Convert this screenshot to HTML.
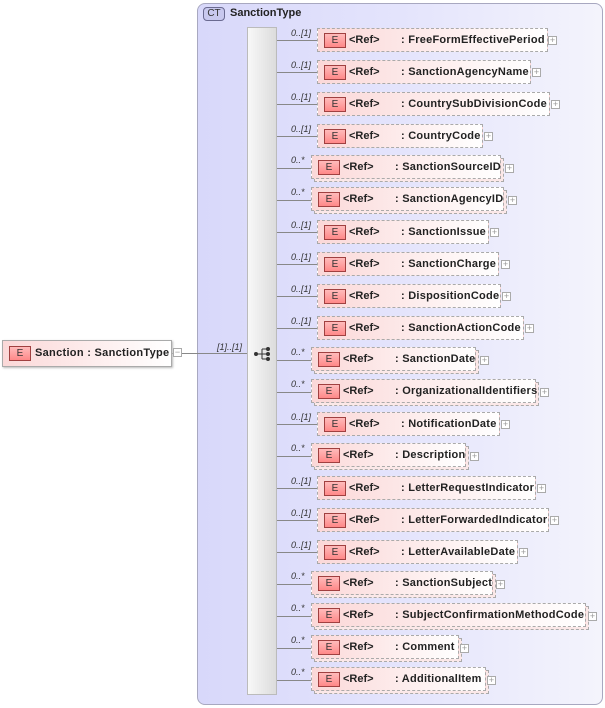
<!DOCTYPE html>
<html><head><meta charset="utf-8"><style>
*{margin:0;padding:0;box-sizing:border-box}
body{width:605px;height:708px;background:#fff;position:relative;overflow:hidden;font-family:"Liberation Sans",Arial,sans-serif;font-size:11px;font-weight:bold;color:#222}
.ct{position:absolute;left:197px;top:3px;width:406px;height:702px;border:1px solid #a8a8c0;border-radius:8px;background:linear-gradient(90deg,#d8d8fa 0%,#e4e4fc 50%,#f4f4fc 100%)}
.ctl{position:absolute;left:203px;top:7px;width:22px;height:14px;border:1px solid #6a6a90;border-radius:4px;background:#c8c8ee;font-weight:normal;font-size:10px;text-align:center;line-height:12px;color:#333}
.ctt{position:absolute;left:230px;top:7px;font-size:11px}
.seq{position:absolute;left:247px;top:27px;width:30px;height:668px;border:1px solid #bbb;background:linear-gradient(90deg,#f8f8f8,#dcdcdc)}
.ln{position:absolute;height:1px;background:#888}
.b{position:absolute;height:24px;border:1px dashed #aaa;background:linear-gradient(90deg,#fbd8d8,#fff);white-space:nowrap;line-height:22px}
.sh{position:absolute;height:24px;border:1px dashed #aaa;background:#fbe8e8}
.e{position:absolute;left:6px;top:4px;width:22px;height:15px;border:1px solid #a04040;background:linear-gradient(#fbb,#f88);font-size:10px;font-weight:normal;text-align:center;line-height:13px;color:#333}
.r{position:absolute;left:31px;top:0}
.n{position:absolute;left:83px;top:0;letter-spacing:0.25px}
.p{position:absolute;width:9px;height:9px;border:1px solid #aaa;background:#fff;font-size:9px;line-height:7px;text-align:center;color:#999;font-weight:normal}
.c{position:absolute;font-size:9px;font-style:italic;font-weight:normal;color:#333}
</style></head><body>
<div class="ct"></div><div class="ctl">CT</div><div class="ctt">SanctionType</div>
<div class="ln" style="left:172px;top:353px;width:10px"></div>
<div class="ln" style="left:182px;top:353px;width:65px"></div>
<div class="c" style="left:217px;top:342px">[1]..[1]</div>
<div class="b" style="left:2px;top:340px;width:170px;height:27px;border:1px solid #aaa;box-shadow:1px 1px 2px #bbb;line-height:25px"><div class="e" style="top:5px">E</div><span style="position:absolute;left:32px;letter-spacing:0.3px">Sanction : SanctionType</span></div>
<div class="p" style="left:173px;top:348px">−</div>
<div class="seq"></div>
<svg style="position:absolute;left:253px;top:346px" width="20" height="16"><circle cx="3" cy="8" r="2" fill="#333"/><line x1="3" y1="8" x2="9" y2="8" stroke="#333"/><line x1="9" y1="3" x2="9" y2="13" stroke="#333"/><line x1="9" y1="3" x2="14" y2="3" stroke="#333"/><line x1="9" y1="8" x2="14" y2="8" stroke="#333"/><line x1="9" y1="13" x2="14" y2="13" stroke="#333"/><circle cx="15" cy="3" r="2" fill="#333"/><circle cx="15" cy="8" r="2" fill="#333"/><circle cx="15" cy="13" r="2" fill="#333"/></svg>

<div class="ln" style="left:277px;top:40px;width:40px"></div><div class="c" style="left:291px;top:28px">0..[1]</div><div class="b" style="left:317px;top:28px;width:231px"><div class="e">E</div><span class="r">&lt;Ref&gt;</span><span class="n">: FreeFormEffectivePeriod</span></div><div class="p" style="left:548px;top:36px">+</div>
<div class="ln" style="left:277px;top:72px;width:40px"></div><div class="c" style="left:291px;top:60px">0..[1]</div><div class="b" style="left:317px;top:60px;width:214px"><div class="e">E</div><span class="r">&lt;Ref&gt;</span><span class="n">: SanctionAgencyName</span></div><div class="p" style="left:532px;top:68px">+</div>
<div class="ln" style="left:277px;top:104px;width:40px"></div><div class="c" style="left:291px;top:92px">0..[1]</div><div class="b" style="left:317px;top:92px;width:233px"><div class="e">E</div><span class="r">&lt;Ref&gt;</span><span class="n">: CountrySubDivisionCode</span></div><div class="p" style="left:551px;top:100px">+</div>
<div class="ln" style="left:277px;top:136px;width:40px"></div><div class="c" style="left:291px;top:124px">0..[1]</div><div class="b" style="left:317px;top:124px;width:166px"><div class="e">E</div><span class="r">&lt;Ref&gt;</span><span class="n">: CountryCode</span></div><div class="p" style="left:484px;top:132px">+</div>
<div class="ln" style="left:277px;top:168px;width:34px"></div><div class="c" style="left:291px;top:155px">0..*</div><div class="sh" style="left:314px;top:158px;width:190px"></div><div class="b" style="left:311px;top:155px;width:190px"><div class="e">E</div><span class="r">&lt;Ref&gt;</span><span class="n">: SanctionSourceID</span></div><div class="p" style="left:505px;top:164px">+</div>
<div class="ln" style="left:277px;top:200px;width:34px"></div><div class="c" style="left:291px;top:187px">0..*</div><div class="sh" style="left:314px;top:190px;width:193px"></div><div class="b" style="left:311px;top:187px;width:193px"><div class="e">E</div><span class="r">&lt;Ref&gt;</span><span class="n">: SanctionAgencyID</span></div><div class="p" style="left:508px;top:196px">+</div>
<div class="ln" style="left:277px;top:232px;width:40px"></div><div class="c" style="left:291px;top:220px">0..[1]</div><div class="b" style="left:317px;top:220px;width:172px"><div class="e">E</div><span class="r">&lt;Ref&gt;</span><span class="n">: SanctionIssue</span></div><div class="p" style="left:490px;top:228px">+</div>
<div class="ln" style="left:277px;top:264px;width:40px"></div><div class="c" style="left:291px;top:252px">0..[1]</div><div class="b" style="left:317px;top:252px;width:182px"><div class="e">E</div><span class="r">&lt;Ref&gt;</span><span class="n">: SanctionCharge</span></div><div class="p" style="left:501px;top:260px">+</div>
<div class="ln" style="left:277px;top:296px;width:40px"></div><div class="c" style="left:291px;top:284px">0..[1]</div><div class="b" style="left:317px;top:284px;width:184px"><div class="e">E</div><span class="r">&lt;Ref&gt;</span><span class="n">: DispositionCode</span></div><div class="p" style="left:502px;top:292px">+</div>
<div class="ln" style="left:277px;top:328px;width:40px"></div><div class="c" style="left:291px;top:316px">0..[1]</div><div class="b" style="left:317px;top:316px;width:207px"><div class="e">E</div><span class="r">&lt;Ref&gt;</span><span class="n">: SanctionActionCode</span></div><div class="p" style="left:525px;top:324px">+</div>
<div class="ln" style="left:277px;top:360px;width:34px"></div><div class="c" style="left:291px;top:347px">0..*</div><div class="sh" style="left:314px;top:350px;width:165px"></div><div class="b" style="left:311px;top:347px;width:165px"><div class="e">E</div><span class="r">&lt;Ref&gt;</span><span class="n">: SanctionDate</span></div><div class="p" style="left:480px;top:356px">+</div>
<div class="ln" style="left:277px;top:392px;width:34px"></div><div class="c" style="left:291px;top:379px">0..*</div><div class="sh" style="left:314px;top:382px;width:225px"></div><div class="b" style="left:311px;top:379px;width:225px"><div class="e">E</div><span class="r">&lt;Ref&gt;</span><span class="n">: OrganizationalIdentifiers</span></div><div class="p" style="left:540px;top:388px">+</div>
<div class="ln" style="left:277px;top:424px;width:40px"></div><div class="c" style="left:291px;top:412px">0..[1]</div><div class="b" style="left:317px;top:412px;width:183px"><div class="e">E</div><span class="r">&lt;Ref&gt;</span><span class="n">: NotificationDate</span></div><div class="p" style="left:501px;top:420px">+</div>
<div class="ln" style="left:277px;top:456px;width:34px"></div><div class="c" style="left:291px;top:443px">0..*</div><div class="sh" style="left:314px;top:446px;width:155px"></div><div class="b" style="left:311px;top:443px;width:155px"><div class="e">E</div><span class="r">&lt;Ref&gt;</span><span class="n">: Description</span></div><div class="p" style="left:470px;top:452px">+</div>
<div class="ln" style="left:277px;top:488px;width:40px"></div><div class="c" style="left:291px;top:476px">0..[1]</div><div class="b" style="left:317px;top:476px;width:219px"><div class="e">E</div><span class="r">&lt;Ref&gt;</span><span class="n">: LetterRequestIndicator</span></div><div class="p" style="left:537px;top:484px">+</div>
<div class="ln" style="left:277px;top:520px;width:40px"></div><div class="c" style="left:291px;top:508px">0..[1]</div><div class="b" style="left:317px;top:508px;width:232px"><div class="e">E</div><span class="r">&lt;Ref&gt;</span><span class="n">: LetterForwardedIndicator</span></div><div class="p" style="left:550px;top:516px">+</div>
<div class="ln" style="left:277px;top:552px;width:40px"></div><div class="c" style="left:291px;top:540px">0..[1]</div><div class="b" style="left:317px;top:540px;width:201px"><div class="e">E</div><span class="r">&lt;Ref&gt;</span><span class="n">: LetterAvailableDate</span></div><div class="p" style="left:519px;top:548px">+</div>
<div class="ln" style="left:277px;top:584px;width:34px"></div><div class="c" style="left:291px;top:571px">0..*</div><div class="sh" style="left:314px;top:574px;width:182px"></div><div class="b" style="left:311px;top:571px;width:182px"><div class="e">E</div><span class="r">&lt;Ref&gt;</span><span class="n">: SanctionSubject</span></div><div class="p" style="left:496px;top:580px">+</div>
<div class="ln" style="left:277px;top:616px;width:34px"></div><div class="c" style="left:291px;top:603px">0..*</div><div class="sh" style="left:314px;top:606px;width:275px"></div><div class="b" style="left:311px;top:603px;width:275px"><div class="e">E</div><span class="r">&lt;Ref&gt;</span><span class="n">: SubjectConfirmationMethodCode</span></div><div class="p" style="left:588px;top:612px">+</div>
<div class="ln" style="left:277px;top:648px;width:34px"></div><div class="c" style="left:291px;top:635px">0..*</div><div class="sh" style="left:314px;top:638px;width:148px"></div><div class="b" style="left:311px;top:635px;width:148px"><div class="e">E</div><span class="r">&lt;Ref&gt;</span><span class="n">: Comment</span></div><div class="p" style="left:460px;top:644px">+</div>
<div class="ln" style="left:277px;top:680px;width:34px"></div><div class="c" style="left:291px;top:667px">0..*</div><div class="sh" style="left:314px;top:670px;width:175px"></div><div class="b" style="left:311px;top:667px;width:175px"><div class="e">E</div><span class="r">&lt;Ref&gt;</span><span class="n">: AdditionalItem</span></div><div class="p" style="left:487px;top:676px">+</div>
</body></html>
